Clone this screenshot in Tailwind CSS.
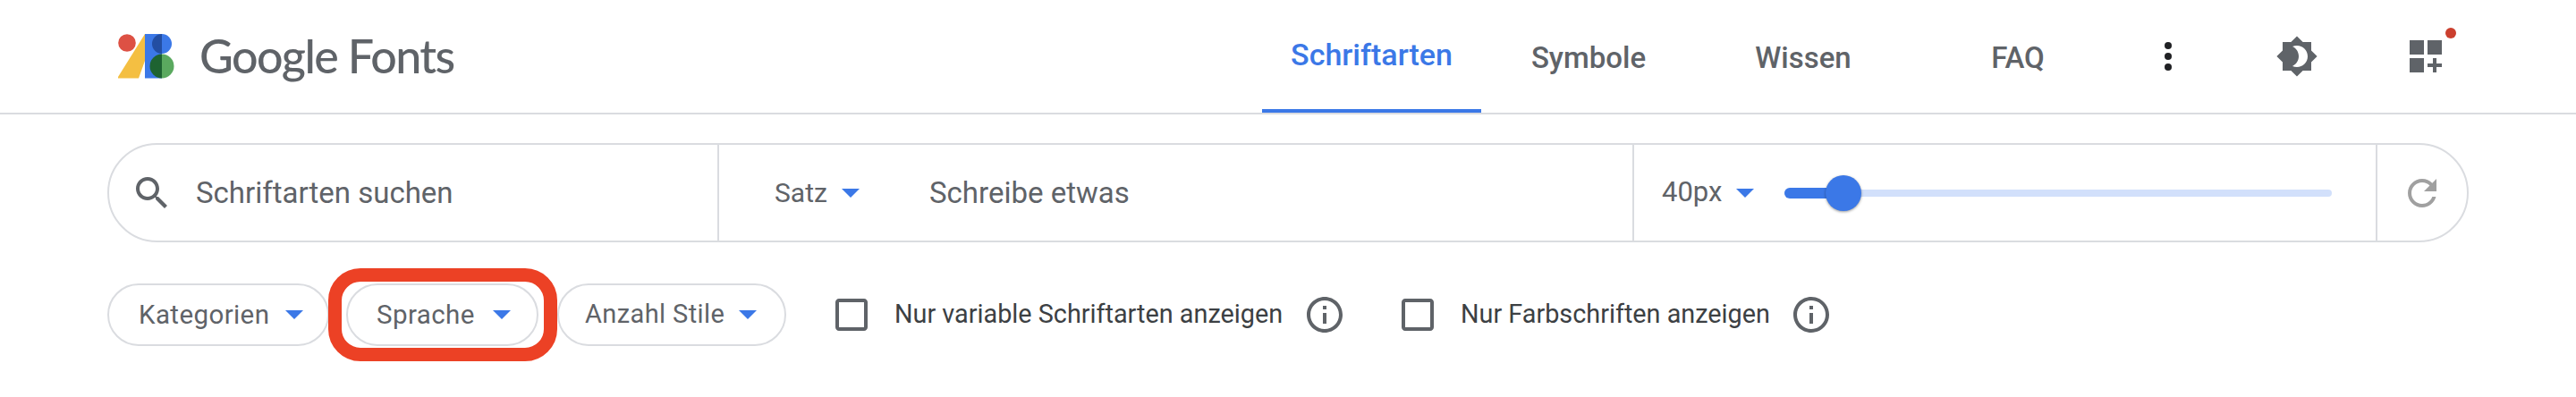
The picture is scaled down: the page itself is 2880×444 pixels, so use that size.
<!DOCTYPE html>
<html lang="de">
<head>
    <meta charset="UTF-8">
    <title>Google Fonts</title>
    <script src="https://cdn.jsdelivr.net/npm/@tailwindcss/browser@4"></script>
</head>
<body class="bg-white w-[2880px] h-[444px] overflow-hidden font-['Roboto',sans-serif] text-[#5f6368]">

    <!-- top bar -->
    <header class="h-[128px] border-b-2 border-[#dadce0] pl-[132px] pr-[120px] flex items-center justify-between">
        <div class="flex items-center gap-[28px]">
            <svg class="w-[63px] h-[50px]" viewBox="132 38 63 50">
                <circle cx="142" cy="48" r="9.8" fill="#dd5144"/>
                <polygon points="162,38 162,68 155,87.5 131,87.5" fill="#f4bf42"/>
                <rect x="162" y="38" width="19" height="49.5" fill="#3b78e7"/>
                <path d="M181 38a11 11 0 0 1 0 22z" fill="#3b78e7"/>
                <path d="M181 38a11 11 0 0 0 0 22z" fill="#234ea3"/>
                <path d="M181 60.5a13.5 13.5 0 0 1 0 27z" fill="#5aa95f"/>
                <path d="M181 60.5a13.5 13.5 0 0 0 0 27z" fill="#1e6331"/>
            </svg>
            <span class="font-['Lato',sans-serif] font-medium text-[52px] leading-none tracking-[-1.6px] pb-[2px]">Google Fonts</span>
        </div>

        <nav class="flex items-center h-full text-[33px] font-medium">
            <a class="w-[245px] h-full border-b-4 border-[#3b78e7] text-[#3b78e7] text-[34px] flex items-center justify-center">Schriftarten</a>
            <a class="w-[240px] text-center pt-[3px]">Symbole</a>
            <a class="w-[240px] text-center pt-[3px]">Wissen</a>
            <a class="w-[240px] text-center pt-[3px]">FAQ</a>
            <div class="flex items-center gap-[48px]">
                <div class="w-[96px] flex justify-center">
                    <svg class="w-[12px] h-[48px]" viewBox="0 0 12 48" fill="#202124">
                        <circle cx="6" cy="12" r="4"/><circle cx="6" cy="24" r="4"/><circle cx="6" cy="36" r="4"/>
                    </svg>
                </div>
                <div class="w-[96px] flex justify-center">
                    <svg class="w-[48px] h-[48px]" viewBox="0 0 24 24" fill="#5f6368">
                        <path d="M20 8.69V4h-4.69L12 .69 8.69 4H4v4.69L.69 12 4 15.31V20h4.69L12 23.31 15.31 20H20v-4.69L23.31 12 20 8.69zM12 18c-.89 0-1.74-.2-2.5-.55C11.56 16.5 13 14.42 13 12s-1.44-4.5-3.5-5.45C10.26 6.2 11.11 6 12 6c3.31 0 6 2.69 6 6s-2.69 6-6 6z"/>
                    </svg>
                </div>
                <div class="w-[96px] flex justify-center relative">
                    <svg class="w-[36px] h-[36px]" viewBox="0 0 36 36" fill="#5f6368">
                        <rect width="16" height="16"/><rect x="20" width="16" height="16"/><rect y="20" width="16" height="16"/>
                        <path d="M26 20h4v6h6v4h-6v6h-4v-6h-6v-4h6z"/>
                    </svg>
                    <span class="absolute left-[70px] top-[-14px] w-[12px] h-[12px] rounded-full bg-[#cb3f2e]"></span>
                </div>
            </div>
        </nav>
    </header>

    <!-- search bar -->
    <div class="mx-[120px] mt-[32px] h-[111px] border-2 border-[#dadce0] rounded-[56px] flex items-stretch text-[33px]">
        <div class="w-[682px] border-r-2 border-[#dadce0] pl-[24px] flex items-center">
            <svg class="w-[48px] h-[48px]" viewBox="0 0 24 24" fill="#5f6368">
                <path d="M15.5 14h-.79l-.28-.27C15.41 12.59 16 11.11 16 9.5 16 5.91 13.09 3 9.5 3S3 5.91 3 9.5 5.91 16 9.5 16c1.61 0 3.09-.59 4.23-1.57l.27.28v.79l5 4.99L20.49 19l-4.99-5zm-6 0C7.01 14 5 11.99 5 9.5S7.01 5 9.5 5 14 7.01 14 9.5 11.99 14 9.5 14z"/>
            </svg>
            <span class="ml-[25px]">Schriftarten suchen</span>
        </div>
        <div class="w-[1023px] border-r-2 border-[#dadce0] pl-[62px] flex items-center">
            <span class="text-[30px] w-[58px]">Satz</span>
            <svg class="w-[20px] h-[10px] ml-[17px]" viewBox="0 0 20 10" fill="#3b78e7"><polygon points="0,0 20,0 10,10"/></svg>
            <span class="ml-[78px]">Schreibe etwas</span>
        </div>
        <div class="w-[831px] border-r-2 border-[#dadce0] pl-[31px] flex items-center">
            <span class="text-[31px] w-[67px]">40px</span>
            <svg class="w-[20px] h-[10px] ml-[16px]" viewBox="0 0 20 10" fill="#3b78e7"><polygon points="0,0 20,0 10,10"/></svg>
            <div class="relative ml-[34px] w-[612px] h-[8px] rounded-full bg-[#d2e0fb]">
                <div class="absolute left-0 top-[-2px] h-[12px] w-[66px] rounded-full bg-[#3b78e7]"></div>
                <div class="absolute left-[46px] top-[-16px] w-[40px] h-[40px] rounded-full bg-[#3b78e7] shadow-[0_1px_3px_rgba(0,0,0,0.4)]"></div>
            </div>
        </div>
        <div class="flex-1 pl-[26px] flex items-center">
            <svg class="w-[48px] h-[48px]" viewBox="0 0 24 24" fill="#a0a0a0">
                <path d="M17.65 6.35C16.2 4.9 14.21 4 12 4c-4.42 0-7.99 3.58-7.99 8s3.57 8 7.99 8c3.73 0 6.84-2.55 7.73-6h-2.08c-.82 2.33-3.04 4-5.65 4-3.31 0-6-2.69-6-6s2.69-6 6-6c1.66 0 3.14.69 4.22 1.78L13 11h7V4l-2.35 2.35z"/>
            </svg>
        </div>
    </div>

    <!-- filters -->
    <div class="pl-[120px] mt-[46px] flex items-center h-[70px] text-[29.5px] tracking-[0.4px]">
        <button class="w-[248px] h-full border-2 border-[#dadce0] rounded-[35px] flex items-center pl-[33px]">
            <span class="w-[147px] text-left whitespace-nowrap">Kategorien</span>
            <svg class="w-[20px] h-[10px] ml-[17px]" viewBox="0 0 20 10" fill="#3b78e7"><polygon points="0,0 20,0 10,10"/></svg>
        </button>
        <button class="relative w-[215px] h-full ml-[19px] border-2 border-[#dadce0] rounded-[35px] flex items-center pl-[32px]">
            <span class="w-[113px] text-left whitespace-nowrap">Sprache</span>
            <svg class="w-[20px] h-[10px] ml-[17px]" viewBox="0 0 20 10" fill="#3b78e7"><polygon points="0,0 20,0 10,10"/></svg>
            <span class="absolute left-[-22px] right-[-23px] top-[-19px] bottom-[-19px] border-[15px] border-[#ec4125] rounded-[36px]"></span>
        </button>
        <button class="w-[256px] h-full ml-[21px] border-2 border-[#dadce0] rounded-[35px] flex items-center pl-[29px]">
            <span class="w-[157px] text-left whitespace-nowrap text-[29px]">Anzahl Stile</span>
            <svg class="w-[20px] h-[10px] ml-[15px]" viewBox="0 0 20 10" fill="#3b78e7"><polygon points="0,0 20,0 10,10"/></svg>
        </button>

        <div class="ml-[49px] flex items-center text-[28.8px] tracking-normal text-[#3c4043]">
            <svg class="w-[48px] h-[48px]" viewBox="0 0 24 24" fill="#5f6368">
                <path d="M19 5v14H5V5h14m0-2H5c-1.1 0-2 .9-2 2v14c0 1.1.9 2 2 2h14c1.1 0 2-.9 2-2V5c0-1.1-.9-2-2-2z"/>
            </svg>
            <span class="ml-[24px] w-[432px] whitespace-nowrap">Nur variable Schriftarten anzeigen</span>
            <svg class="w-[48px] h-[48px] ml-[25px]" viewBox="0 0 24 24" fill="#5f6368">
                <path d="M11 7h2v2h-2zm0 4h2v6h-2zm1-9C6.48 2 2 6.48 2 12s4.48 10 10 10 10-4.48 10-10S17.52 2 12 2zm0 18c-4.41 0-8-3.59-8-8s3.59-8 8-8 8 3.59 8 8-3.59 8-8 8z"/>
            </svg>
            <svg class="w-[48px] h-[48px] ml-[56px]" viewBox="0 0 24 24" fill="#5f6368">
                <path d="M19 5v14H5V5h14m0-2H5c-1.1 0-2 .9-2 2v14c0 1.1.9 2 2 2h14c1.1 0 2-.9 2-2V5c0-1.1-.9-2-2-2z"/>
            </svg>
            <span class="ml-[24px] w-[343px] whitespace-nowrap">Nur Farbschriften anzeigen</span>
            <svg class="w-[48px] h-[48px] ml-[25px]" viewBox="0 0 24 24" fill="#5f6368">
                <path d="M11 7h2v2h-2zm0 4h2v6h-2zm1-9C6.48 2 2 6.48 2 12s4.48 10 10 10 10-4.48 10-10S17.52 2 12 2zm0 18c-4.41 0-8-3.59-8-8s3.59-8 8-8 8 3.59 8 8-3.59 8-8 8z"/>
            </svg>
        </div>
    </div>

</body>
</html>
